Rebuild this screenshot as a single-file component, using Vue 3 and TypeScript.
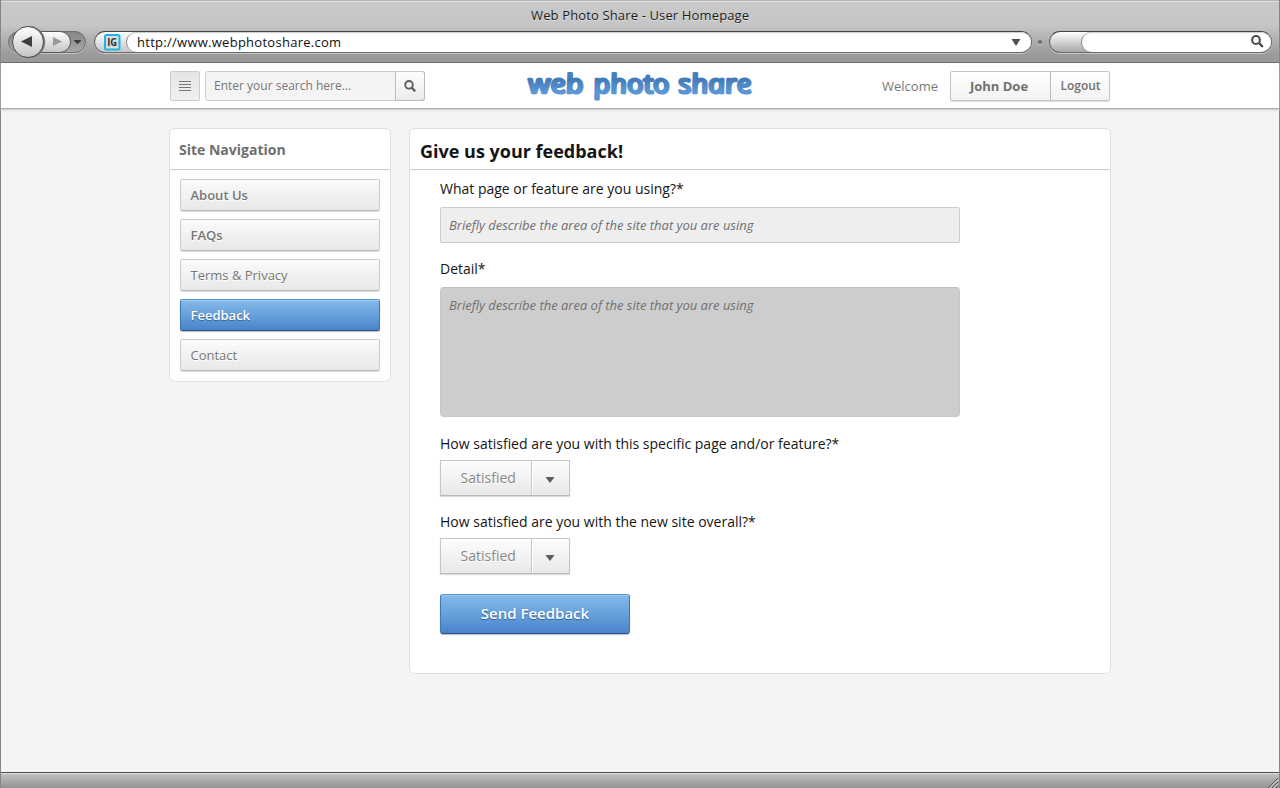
<script setup lang="ts">
import { ref } from 'vue'

interface NavItem {
  label: string
  weight: 'semi' | 'regular'
}

const navItems: NavItem[] = [
  { label: 'About Us', weight: 'semi' },
  { label: 'FAQs', weight: 'semi' },
  { label: 'Terms & Privacy', weight: 'regular' },
  { label: 'Feedback', weight: 'semi' },
  { label: 'Contact', weight: 'regular' },
]
const active = ref<string>('Feedback')
const hint = 'Briefly describe the area of the site that you are using'
const area = ref('')
const detail = ref('')
</script>

<template>
  <div class="window">
    <header class="chrome">
      <div class="window-title"><span>Web Photo Share - User Homepage</span></div>
      <div class="toolbar">
        <svg class="history" width="80" height="36" viewBox="0 0 80 36">
          <defs>
            <linearGradient id="btn" x1="0" y1="0" x2="0" y2="1">
              <stop offset="0" stop-color="#ffffff" />
              <stop offset="1" stop-color="#c4c4c4" />
            </linearGradient>
            <linearGradient id="well" x1="0" y1="0" x2="0" y2="1">
              <stop offset="0" stop-color="#858585" />
              <stop offset="1" stop-color="#a9a9a9" />
            </linearGradient>
          </defs>
          <rect x="0.5" y="8.500" width="77" height="21" rx="10.5" fill="none" stroke="#c6c6c6" />
          <rect x="0.5" y="7.500" width="77" height="21" rx="10.5" fill="url(#well)" stroke="#707070" />
          <path d="M30 7.5H52a10.500 10.500 0 0 1 0 21H30z" fill="url(#btn)" stroke="#555" />
          <circle cx="21.200" cy="18" r="16" fill="#777" />
          <circle cx="20" cy="18" r="15.500" fill="url(#btn)" stroke="#4c4c4c" />
          <path d="M13 17.500L24 12V23z" fill="#3e3e3e" />
          <path d="M54 17.500L45 13V22z" fill="#9a9a9a" />
          <path d="M65.500 16h8L69.500 20.200z" fill="#3c3c3c" />
        </svg>
        <div class="address">
          <svg class="favicon" width="17" height="17" viewBox="0 0 17 17">
            <rect x="1" y="1" width="14.500" height="14.500" rx="1.500" fill="#d8dcdc" stroke="#1cb5e6" stroke-width="2" />
            <text x="8.200" y="12.400" text-anchor="middle" textLength="10" lengthAdjust="spacingAndGlyphs">IG</text>
          </svg>
          <div class="address-field">
            <span>http://www.webphotoshare.com</span>
            <svg width="10" height="7" viewBox="0 0 10 7"><path d="M0.500 0h9L5 7z" fill="#505050" /></svg>
          </div>
        </div>
        <i class="grip"></i>
        <div class="web-search">
          <div class="web-search-field">
            <svg width="13" height="13" viewBox="0 0 13 13" fill="none" stroke="#484848">
              <circle cx="5" cy="5" r="3.900" stroke-width="2" />
              <path d="M8 8l3.800 3.800" stroke-width="2.400" />
            </svg>
          </div>
        </div>
      </div>
    </header>

    <div class="topbar">
      <button class="menu" aria-label="Menu">
        <svg width="12" height="11" viewBox="0 0 12 11" stroke="#747474">
          <path d="M0 0.500h12M0 3.500h12M0 6.500h12M0 9.500h12" />
        </svg>
      </button>
      <div class="search">
        <span class="search-text">Enter your search here...</span>
        <button class="search-go" aria-label="Search">
          <svg width="12" height="12" viewBox="0 0 12 12" fill="none" stroke="#5c5c5c">
            <circle cx="5" cy="4.800" r="3.800" stroke-width="1.900" />
            <path d="M7.600 7.600l3.700 3.700" stroke-width="2.200" />
          </svg>
        </button>
      </div>
      <svg class="logo" width="230" height="38" viewBox="0 0 230 38">
        <defs>
          <linearGradient id="ink" gradientUnits="userSpaceOnUse" x1="0" y1="-22" x2="0" y2="8">
            <stop offset="0" stop-color="#4a83c0" />
            <stop offset="0.300" stop-color="#447cb9" />
            <stop offset="0.700" stop-color="#5b96d6" />
            <stop offset="1" stop-color="#5a92d0" />
          </linearGradient>
        </defs>
        <g transform="translate(0 24.500) skewX(12)" fill="url(#ink)" stroke="url(#ink)">
          <text x="6" y="0" textLength="55" lengthAdjust="spacingAndGlyphs">web</text>
          <text x="71" y="0" textLength="76" lengthAdjust="spacingAndGlyphs">photo</text>
          <text x="156" y="0" textLength="73" lengthAdjust="spacingAndGlyphs">share</text>
        </g>
      </svg>
      <span class="welcome">Welcome</span>
      <div class="account">
        <button class="user">John Doe</button>
        <button class="logout">Logout</button>
      </div>
    </div>

    <main class="page">
      <aside class="panel nav">
        <h2><span>Site Navigation</span></h2>
        <nav>
          <button
            v-for="item in navItems"
            :key="item.label"
            :class="['nav-item', item.weight, { active: item.label === active }]"
            @click="active = item.label"
          >
            {{ item.label }}
          </button>
        </nav>
      </aside>

      <section class="panel feedback">
        <h1><span>Give us your feedback!</span></h1>
        <form @submit.prevent>
          <label class="l1">What page or feature are you using?*</label>
          <input v-model="area" :placeholder="hint" />
          <label class="l2">Detail*</label>
          <textarea v-model="detail" :placeholder="hint"></textarea>
          <label class="l3">How satisfied are you with this specific page and/or feature?*</label>
          <div class="select">
            <span>Satisfied</span>
            <b><svg width="10" height="6" viewBox="0 0 10 6"><path d="M0.500 0h9L5 6z" fill="#5c5c5c" /></svg></b>
          </div>
          <label class="l4">How satisfied are you with the new site overall?*</label>
          <div class="select">
            <span>Satisfied</span>
            <b><svg width="10" height="6" viewBox="0 0 10 6"><path d="M0.500 0h9L5 6z" fill="#5c5c5c" /></svg></b>
          </div>
          <button class="send">Send Feedback</button>
        </form>
      </section>
    </main>

    <footer class="status">
      <svg width="12" height="12" viewBox="0 0 12 12" fill="none">
        <path d="M1 12L11 2M5 12L11 6M9 12L11 10" stroke="#505050" />
        <path d="M2.500 12L11 3.500M6.500 12L11 7.500" stroke="#ddd" />
      </svg>
    </footer>
  </div>
</template>

<style>
body {
  margin: 0;
  overflow: hidden;
}
</style>

<style scoped>
* {
  box-sizing: border-box;
}
button,
input,
textarea {
  font-family: inherit;
  margin: 0;
  padding: 0;
  outline: 0;
}
svg {
  display: block;
  flex: none;
}
.window {
  width: 1280px;
  height: 788px;
  display: flex;
  flex-direction: column;
  font-family: "Open Sans", "Noto Sans", sans-serif;
  background: #f4f4f4;
  border: solid #858585;
  border-width: 0 1px;
}
.chrome {
  height: 63px;
  flex: none;
  border-top: 1px solid #b4b4b4;
  border-bottom: 1px solid #626262;
  background: linear-gradient(#e2e2e2 0 1px, #c9c9c9 1px, #c6c6c6 24px, #9b9b9b 53px, #999 61px);
}
.window-title {
  height: 28px;
  padding-left: 530px;
  font-size: 13px;
  line-height: 28px;
  color: #1c1c1c;
  text-shadow: 0 1px 0 #e0e0e0;
  white-space: nowrap;
}
.window-title span {
  letter-spacing: 0.14px;
}
.toolbar {
  display: flex;
  align-items: flex-start;
  padding: 2px 7px 0;
}
.history {
  margin-top: -7px;
}
.address {
  width: 938px;
  height: 22px;
  margin-left: 6px;
  display: flex;
  border: 1px solid #6a6a6a;
  border-top-color: #444;
  border-radius: 11px;
  background: linear-gradient(#fff, #c6c6c6);
  box-shadow: 0 1px 0 #c8c8c8;
}
.favicon {
  margin: 2px 0 0 9px;
}
.favicon text {
  font: bold 11px "Open Sans", sans-serif;
  fill: #333;
}
.address-field {
  flex: 1;
  display: flex;
  align-items: center;
  justify-content: space-between;
  margin-left: 5px;
  padding: 0 10px 0 10px;
  border-left: 1px solid #888;
  border-radius: 10px;
  background: #fff;
  box-shadow: inset 0 2px 1px -1px #ccc;
  font-size: 13px;
  color: #111;
}
.address-field span {
  letter-spacing: 0.27px;
}
.grip {
  width: 4px;
  height: 4px;
  margin: 9px 7px 0 6px;
  border-radius: 2px;
  background: #6d6d6d;
  box-shadow: 0 1px 0 #ccc;
}
.web-search {
  width: 223px;
  height: 22px;
  padding-left: 31px;
  border: 1px solid #6a6a6a;
  border-top-color: #444;
  border-radius: 11px;
  background: linear-gradient(#fff, #a8a8a8);
  box-shadow: 0 1px 0 #c8c8c8;
}
.web-search-field {
  height: 20px;
  display: flex;
  justify-content: flex-end;
  padding: 3px 7px 0 0;
  border-left: 1px solid #888;
  border-radius: 10px;
  background: #fff;
  box-shadow: inset 0 2px 1px -1px #ccc;
}
.topbar {
  height: 46px;
  flex: none;
  display: flex;
  align-items: flex-start;
  padding: 8px 169px 0;
  background: #fff;
  border-bottom: 1px solid #a9a9a9;
  box-shadow: 0 1px 2px #ccc;
}
.menu {
  width: 30px;
  height: 30px;
  padding: 0 0 0 8px;
  border: 1px solid #ccc;
  border-radius: 2px;
  background: linear-gradient(#e5e5e5, #f0f0f0);
}
.search {
  width: 220px;
  height: 30px;
  margin-left: 5px;
  display: flex;
  border: 1px solid #ccc;
  border-radius: 3px;
  background: #f4f4f4;
}
.search-text {
  flex: 1;
  padding-left: 8px;
  font-size: 12px;
  line-height: 28px;
  color: #777;
  white-space: nowrap;
}
.search-go {
  width: 30px;
  height: 30px;
  margin: -1px -1px 0 0;
  padding: 0 0 0 8px;
  border: 1px solid #bbb;
  border-top-color: #ccc;
  border-radius: 0 3px 3px 0;
  background: linear-gradient(#fdfdfd, #ececec);
}
.logo {
  margin: -3px 0 0 99px;
  overflow: visible;
}
.logo text {
  font: italic 400 26px "Open Sans", sans-serif;
  stroke-width: 2.7px;
  stroke-linejoin: round;
}
.welcome {
  margin-left: auto;
  margin-right: 12px;
  font-size: 13px;
  line-height: 30px;
  color: #777;
}
.account {
  width: 160px;
  height: 30px;
  display: flex;
  border: 1px solid #c4c4c4;
  border-radius: 2px;
  background: linear-gradient(#fff, #f2f2f2);
  box-shadow: 0 1px 1px #ddd;
}
.account button {
  border: 0;
  background: none;
  color: #707070;
  font-weight: 700;
  white-space: nowrap;
}
.user {
  width: 99px;
  font-size: 13px;
  padding: 0 3px 0 0;
}
.account .logout {
  flex: 1;
  border-left: 1px solid #bbb;
  font-size: 12px;
  font-weight: 600;
  padding: 0 0 2px 1px;
}
.page {
  flex: 1;
  display: flex;
  align-items: flex-start;
  gap: 18px;
  padding: 19px 0 0 168px;
}
.panel {
  background: #fff;
  border: 1px solid #e0e0e0;
  border-radius: 6px;
}
.panel h1,
.panel h2 {
  height: 41px;
  margin: 0;
  padding-left: 10px;
  border-bottom: 1px solid #ccc;
  font-weight: 700;
  color: #151515;
  font-size: 18px;
  line-height: 44px;
}
.panel h2 {
  padding-left: 9px;
  font-size: 14px;
  line-height: 41px;
  color: #6e6e6e;
}
.nav {
  width: 222px;
  height: 254px;
}
nav {
  display: flex;
  flex-direction: column;
  gap: 8px;
  padding: 9px 10px;
}
.nav-item {
  height: 32px;
  padding: 0 0 0 9.5px;
  text-align: left;
  font-size: 13px;
  color: #777;
  border: 1px solid #ccc;
  border-bottom-color: #b9b9b9;
  border-radius: 2px;
  background: linear-gradient(#fbfbfb, #e8e8e8);
  box-shadow: 0 1px 1px #ddd;
  text-shadow: 0 1px 0 #fff;
}
.semi {
  font-weight: 600;
}
.nav-item.active {
  color: #fff;
  text-shadow: 0 1px 1px #35608f;
}
.nav-item.active,
.send {
  border: 1px solid #3c78b8;
  border-top-color: #5697cf;
  border-bottom-color: #2b5590;
  background: linear-gradient(#85bae8, #6aa3dd 45%, #4a83ca);
  box-shadow: 0 1px 1px #bbb, inset 0 1px 0 #9acbf0;
}
.feedback {
  width: 702px;
  height: 546px;
}
form {
  display: flex;
  flex-direction: column;
  align-items: flex-start;
  padding: 9px 30px;
}
label {
  height: 20px;
  font-size: 14px;
  line-height: 20px;
  color: #151515;
  white-space: nowrap;
}
.l2 {
  margin-top: 16px;
}
.l3 {
  margin-top: 17px;
}
.l4 {
  margin-top: 16px;
}
input,
textarea {
  width: 520px;
  height: 36px;
  margin-top: 8px;
  padding: 0 8px;
  border: 1px solid #ccc;
  border-radius: 2px;
  background: #eee;
  font-size: 13px;
  font-style: italic;
  letter-spacing: -0.015px;
}
textarea {
  height: 130px;
  padding-top: 8px;
  resize: none;
  border-color: #c0c0c0 #c8c8c8 #c8c8c8;
  border-radius: 4px;
  background: #cdcdcd;
}
::placeholder {
  color: #707070;
  opacity: 1;
}
.select {
  width: 130px;
  height: 36px;
  margin-top: 6px;
  display: flex;
  border: 1px solid #c6c6c6;
  border-bottom-color: #b9b9b9;
  background: linear-gradient(#fdfdfd, #e8e8e8);
  box-shadow: 0 1px 1px #ddd;
}
.select span {
  width: 90px;
  padding-left: 19.5px;
  font-size: 14px;
  line-height: 34px;
  color: #888;
  text-shadow: 0 1px 0 #fff;
}
.select b {
  flex: 1;
  display: flex;
  align-items: center;
  padding: 4px 0 0 13px;
  border-left: 1px solid #c8c8c8;
  box-shadow: inset 1px 0 0 #fff;
}
.send {
  width: 190px;
  height: 40px;
  margin-top: 20px;
  padding-bottom: 2px;
  border-radius: 3px;
  color: #fff;
  font-size: 15px;
  font-weight: 600;
  text-shadow: 0 1px 1px #35608f;
}
.status {
  height: 16px;
  flex: none;
  display: flex;
  justify-content: flex-end;
  align-items: flex-end;
  border-top: 1px solid #4a4a4a;
  background: linear-gradient(#e0e0e0 0 1px, #c0c0c0 1px, #939393);
}
</style>
